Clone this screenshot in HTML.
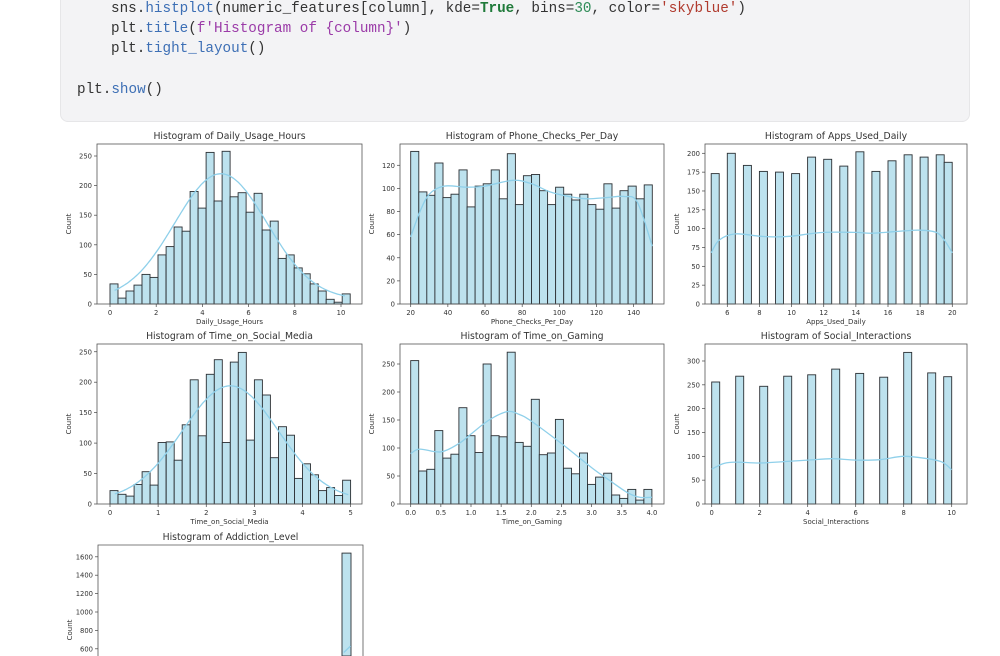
<!DOCTYPE html>
<html><head><meta charset="utf-8"><style>
html,body{margin:0;padding:0;background:#fff;width:1000px;height:656px;overflow:hidden;position:relative}
.code{position:absolute;left:60px;top:-10px;width:908px;height:130px;background:#f3f3f5;border:1px solid #e6e6e8;border-radius:8px}
.ln{position:absolute;font-family:"Liberation Mono",monospace;font-size:14.3px;color:#333;white-space:pre;line-height:18px}
.f{color:#3d6fb5}.k{color:#1f7a3a;font-weight:bold}.n{color:#2e8b57}.s{color:#b03a2e}.p{color:#9b3ba8}
svg{position:absolute;left:0;top:0;overflow:hidden}
</style></head><body>
<div class="code"></div>
<div class="ln" style="left:111px;top:0px">sns.<span class="f">histplot</span>(numeric_features[column], kde=<span class="k">True</span>, bins=<span class="n">30</span>, color=<span class="s">'skyblue'</span>)</div>
<div class="ln" style="left:111px;top:20px">plt.<span class="f">title</span>(<span class="p">f'Histogram of {column}'</span>)</div>
<div class="ln" style="left:111px;top:40px">plt.<span class="f">tight_layout</span>()</div>
<div class="ln" style="left:77px;top:81px">plt.<span class="f">show</span>()</div>
<svg id="s" width="1000" height="656" viewBox="0 0 1000 656" xmlns="http://www.w3.org/2000/svg"></svg>
<script>
var P=[
{t:"Histogram of Daily_Usage_Hours",xl:"Daily_Usage_Hours",L:97,R:362,T:144,B:304,x0:110,sx:23.1,bw:10.4/30,bs:0,y0:304,sy:0.592,
yt:[0,50,100,150,200,250],xt:[0,2,4,6,8,10],xf:0,
v:[34,10,22,32,50,45,83,97,130,123,190,162,256,174,258,181,188,155,187,125,140,77,83,61,51,34,22,8,3,17],
kde:function(x){return 212*Math.exp(-Math.pow(x-4.8,2)/(2*2.0*2.0))+8},kr:[0.2,10.3]},
{t:"Histogram of Phone_Checks_Per_Day",xl:"Phone_Checks_Per_Day",L:400,R:664,T:144,B:304,x0:410.7-20*1.858,sx:1.858,bw:130/30,bs:20,y0:304,sy:1.156,
yt:[0,20,40,60,80,100,120],xt:[20,40,60,80,100,120,140],xf:0,
v:[132,97,94,122,92,95,116,84,102,104,116,91,130,86,111,112,98,86,101,95,90,95,86,82,104,83,98,102,91,103],
pts:[[20,58],[25,80],[30,95],[38,102],[50,101],[60,102],[75,107],[85,104],[95,97],[105,93],[115,91],[125,92],[135,93],[142,88],[150,50]]},
{t:"Histogram of Apps_Used_Daily",xl:"Apps_Used_Daily",L:705,R:967,T:144,B:304,x0:727.3-6*16.07,sx:16.07,y0:304,sy:0.7535,
yt:[0,25,50,75,100,125,150,175,200],xt:[6,8,10,12,14,16,18,20],xf:0,
bars:[[5,173],[6,200],[7,184],[8,176],[9,175],[10,173],[11,195],[12,192],[13,183],[14,202],[15,176],[16,190],[17,198],[18,195],[19,198],[19.5,188]],bwd:0.5,
pts:[[5,68],[5.5,85],[6.5,93],[8,90],[9,89],[10,90],[12,95],[14,95],[15,94],[17,97],[18,98],[19,95],[19.5,85],[20,68]]},
{t:"Histogram of Time_on_Social_Media",xl:"Time_on_Social_Media",L:97,R:362,T:344,B:504,x0:110,sx:48.13,bw:5/30,bs:0,y0:504,sy:0.609,
yt:[0,50,100,150,200,250],xt:[0,1,2,3,4,5],xf:0,
v:[22,16,13,32,53,31,101,102,72,130,204,112,213,237,101,233,249,105,204,179,76,127,113,42,66,48,22,27,14,39],
kde:function(x){return 188*Math.exp(-Math.pow(x-2.5,2)/(2*1.0*1.0))+6},kr:[0.1,4.95]},
{t:"Histogram of Time_on_Gaming",xl:"Time_on_Gaming",L:400,R:664,T:344,B:504,x0:410.7,sx:60.3,bw:4/30,bs:0,y0:504,sy:0.56,
yt:[0,50,100,150,200,250],xt:[0,0.5,1,1.5,2,2.5,3,3.5,4],xf:1,
v:[256,59,62,131,82,89,172,122,92,250,122,120,271,110,103,187,88,91,151,64,54,91,35,48,55,16,10,26,7,26],
pts:[[0,90],[0.15,98],[0.5,93],[0.8,108],[1.0,125],[1.3,150],[1.6,165],[1.8,160],[2.0,148],[2.5,108],[3.0,65],[3.3,42],[3.6,20],[3.8,12],[4.0,12]]},
{t:"Histogram of Social_Interactions",xl:"Social_Interactions",L:705,R:967,T:344,B:504,x0:711.7,sx:24,y0:504,sy:0.4767,
yt:[0,50,100,150,200,250,300],xt:[0,2,4,6,8,10],xf:0,
bars:[[0,256],[1,268],[2,247],[3,268],[4,271],[5,283],[6,274],[7,266],[8,318],[9,275],[29/3,267]],bwd:1/3,
pts:[[0,73],[0.5,85],[1,88],[2,86],[3,89],[4,92],[5,95],[6,92],[7,93],[8,100],[9,95],[9.6,88],[10,72]]},
{t:"Histogram of Addiction_Level",xl:"",L:98,R:363,T:545,B:658,x0:342,sx:9,y0:704,sy:0.092,
yt:[600,800,1000,1200,1400,1600],xt:[],xf:0,bars:[[0,1640]],bwd:1,pts:[[0.2,560],[0.95,630]],cy:630}
];
var h='',F='font-family="DejaVu Sans, Liberation Sans, sans-serif" fill="#333"';
P.forEach(function(p){
 var X=function(x){return p.x0+x*p.sx},Y=function(y){return p.y0-y*p.sy};
 h+='<text x="'+((p.L+p.R)/2)+'" y="'+(p.T-5)+'" font-size="9.3" text-anchor="middle" '+F+'>'+p.t+'</text>';
 var bars=[];
 if(p.v){p.v.forEach(function(v,i){bars.push([p.bs+i*p.bw,v,p.bw])});}
 else p.bars.forEach(function(b){bars.push([b[0],b[1],p.bwd])});
 bars.forEach(function(b){var x=X(b[0]),w=b[2]*p.sx,y=Y(b[1]),bot=Math.min(p.y0,656);
  h+='<rect x="'+x.toFixed(1)+'" y="'+y.toFixed(1)+'" width="'+w.toFixed(1)+'" height="'+(bot-y).toFixed(1)+'" fill="#bde2ee" stroke="#2b2f33" stroke-width="0.9"/>';});
 var pts=[];
 if(p.kde){for(var x=p.kr[0];x<=p.kr[1];x+=(p.kr[1]-p.kr[0])/80)pts.push([X(x),Y(p.kde(x))]);}
 else p.pts.forEach(function(q){pts.push([X(q[0]),Math.min(Y(q[1]),656)])});
 var d='M'+pts[0][0].toFixed(1)+','+pts[0][1].toFixed(1);
 for(var i=0;i<pts.length-1;i++){var p0=pts[Math.max(0,i-1)],p1=pts[i],p2=pts[i+1],p3=pts[Math.min(pts.length-1,i+2)];
  d+=' C'+(p1[0]+(p2[0]-p0[0])/6).toFixed(1)+','+(p1[1]+(p2[1]-p0[1])/6).toFixed(1)+' '+(p2[0]-(p3[0]-p1[0])/6).toFixed(1)+','+(p2[1]-(p3[1]-p1[1])/6).toFixed(1)+' '+p2[0].toFixed(1)+','+p2[1].toFixed(1);}
 h+='<path d="'+d+'" fill="none" stroke="#8fd0ea" stroke-width="1.3"/>';
 if(p.B>656){h+='<path d="M'+p.L+','+656+'V'+p.T+'H'+p.R+'V656" fill="none" stroke="#555" stroke-width="0.8"/>';}
 else h+='<rect x="'+p.L+'" y="'+p.T+'" width="'+(p.R-p.L)+'" height="'+(p.B-p.T)+'" fill="none" stroke="#555" stroke-width="0.8"/>';
 p.yt.forEach(function(t){var y=Y(t);h+='<line x1="'+(p.L-3)+'" x2="'+p.L+'" y1="'+y+'" y2="'+y+'" stroke="#444" stroke-width="0.7"/><text x="'+(p.L-5)+'" y="'+(y+2.5)+'" font-size="6.8" text-anchor="end" '+F+'>'+t+'</text>';});
 p.xt.forEach(function(t){var x=X(t);h+='<line x1="'+x+'" x2="'+x+'" y1="'+p.B+'" y2="'+(p.B+3)+'" stroke="#444" stroke-width="0.7"/><text x="'+x+'" y="'+(p.B+11)+'" font-size="6.8" text-anchor="middle" '+F+'>'+(p.xf?t.toFixed(1):t)+'</text>';});
 if(p.xl)h+='<text x="'+((p.L+p.R)/2)+'" y="'+(p.B+20)+'" font-size="7" text-anchor="middle" '+F+'>'+p.xl+'</text>';
 var cy=p.cy||(p.T+p.B)/2;
 h+='<text transform="translate('+(p.L-26)+','+cy+') rotate(-90)" font-size="7" text-anchor="middle" '+F+'>Count</text>';
});
document.getElementById('s').innerHTML=h;
</script>
</body></html>
